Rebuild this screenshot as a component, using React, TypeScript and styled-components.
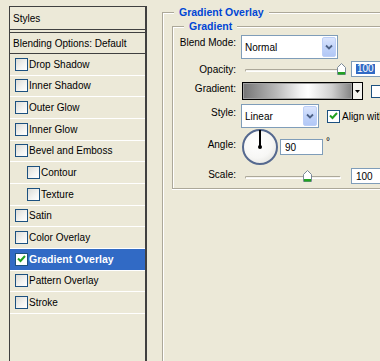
import React from 'react';
import styled, { createGlobalStyle } from 'styled-components';

const GlobalStyle = createGlobalStyle`
  html, body {
    margin: 0;
    padding: 0;
    background: #ece9d8;
    overflow: hidden;
  }
  body {
    font-family: "Liberation Sans", Arial, sans-serif;
    font-size: 10px;
    color: #000;
  }
`;

// Layout
const Dialog = styled.div`
  display: flex;
  align-items: flex-start;
  width: 380px;
  height: 361px;
  overflow: hidden;
  box-sizing: border-box;
  padding: 6px 0 0 9px;
  background: #ece9d8;
`;

// Styles list (left)
const StylesPanel = styled.div`
  flex: none;
  width: 138px;
  height: 400px;
  box-sizing: border-box;
  border: 1px solid #404040;
  border-right-width: 2px;
  border-bottom: none;
`;

const PanelHeader = styled.div`
  height: 22px;
  border-bottom: 1px solid #404040;
  display: flex;
  align-items: center;
  padding-left: 3px;
`;

const BlendingRow = styled.div`
  margin-top: 2px;
  height: 20px;
  border-top: 1px solid #404040;
  border-bottom: 1px solid #404040;
  display: flex;
  align-items: center;
  padding-left: 3px;
`;

const StyleRow = styled.div<{ $indent?: boolean; $selected?: boolean }>`
  height: 21.67px;
  box-sizing: border-box;
  border-bottom: 1px solid #fff;
  display: flex;
  align-items: center;
  gap: 1px;
  padding-left: ${(p) => (p.$indent ? 17 : 5)}px;
  background: ${(p) => (p.$selected ? '#316ac5' : 'transparent')};
  color: ${(p) => (p.$selected ? '#fff' : '#000')};
  font-weight: ${(p) => (p.$selected ? 'bold' : 'normal')};
  font-size: ${(p) => (p.$selected ? '10.5px' : '10px')};
`;

const CheckBoxFrame = styled.span<{ $light?: boolean }>`
  flex: none;
  width: 13px;
  height: 13px;
  box-sizing: border-box;
  border: 1px solid #1c5180;
  background: ${(p) =>
    p.$light ? '#fff' : 'linear-gradient(135deg, #dcdcd7 0%, #f4f4f2 60%, #fff 100%)'};
  display: flex;
  align-items: center;
  justify-content: center;
`;

// Group boxes (right)
const GroupBox = styled.fieldset<{ $inner?: boolean }>`
  margin: 0 0 0 ${(p) => (p.$inner ? 9 : 15)}px;
  padding: ${(p) => (p.$inner ? '0 0 4px 0' : '1px 0 0 0')};
  min-width: 0;
  flex: none;
  width: ${(p) => (p.$inner ? 230 : 240)}px;
  height: ${(p) => (p.$inner ? 'auto' : '380px')};
  box-sizing: border-box;
  border: 1px solid #aca899;
  box-shadow: inset 1px 1px 0 #fff, 0 1px 0 #fff;
`;

const Legend = styled.legend`
  margin-left: 11px;
  padding: 0 5px;
  line-height: 13px;
  font-size: 10.5px;
  font-weight: bold;
  color: #0046d5;
  background: #ece9d8;
`;

const FieldRow = styled.div<{ $top: number; $height: number }>`
  display: flex;
  align-items: center;
  margin-top: ${(p) => p.$top}px;
  height: ${(p) => p.$height}px;
`;

const FieldLabel = styled.span<{ $offset?: number }>`
  flex: none;
  width: 63px;
  margin-right: 5px;
  text-align: right;
  line-height: 13px;
  align-self: ${(p) => (p.$offset === undefined ? 'center' : 'flex-start')};
  margin-top: ${(p) => p.$offset ?? 0}px;
`;

const SelectBox = styled.div<{ $width: number }>`
  flex: none;
  width: ${(p) => p.$width}px;
  height: 100%;
  box-sizing: border-box;
  border: 1px solid #7f9db9;
  background: #fff;
  display: flex;
  align-items: center;
  padding-left: 3px;
`;

const DropButton = styled.span`
  margin: 1px 1px 1px auto;
  align-self: stretch;
  width: 14px;
  box-sizing: border-box;
  border: 1px solid #bccff7;
  border-radius: 2px;
  background: linear-gradient(180deg, #dbe5fd 0%, #c2d4fa 50%, #b2c8f6 100%);
  display: flex;
  align-items: center;
  justify-content: center;
`;

const TextBox = styled.div<{ $width: number }>`
  flex: none;
  width: ${(p) => p.$width}px;
  height: 16px;
  box-sizing: border-box;
  border: 1px solid #7f9db9;
  background: #fff;
  display: flex;
  align-items: center;
  padding-left: 4px;
  margin-left: ${(p) => (p.$width === 43 ? 2 : 4)}px;
`;

const Selected = styled.span`
  background: #316ac5;
  color: #fff;
  line-height: 10px;
  padding: 0 1px;
`;

const SliderWrap = styled.div`
  flex: none;
  position: relative;
  width: 106px;
  height: 100%;
  display: flex;
  align-items: center;
`;

const SliderTrack = styled.div`
  flex: 1;
  margin: 2px 6px 0 4px;
  height: 3px;
  box-sizing: border-box;
  border: 1px solid #aca899;
  border-bottom-color: #fff;
  border-right-color: #fff;
  border-radius: 2px;
  background: #f4f3ee;
`;

const SliderThumb = styled.svg`
  position: absolute;
  top: 50%;
  margin-top: -6px;
  margin-left: -4px;
`;

const GradientPicker = styled.div`
  flex: none;
  display: flex;
  width: 121px;
  height: 18px;
  margin-left: 1px;
  box-sizing: border-box;
  border: 1px solid #000;
`;

const GradientSwatch = styled.div`
  flex: 1;
  border: 1px solid #a0a0a0;
  background: linear-gradient(
    to right,
    #777 0%,
    #b9b9b9 30%,
    #f2f2f2 52%,
    #fff 60%,
    #d0d0d0 82%,
    #868686 100%
  );
`;

const GradientArrow = styled.div`
  flex: none;
  width: 9px;
  border-left: 1px solid #000;
  background: #f4f3ee;
  display: flex;
  align-items: center;
  justify-content: center;
`;

const InlineCheck = styled.div<{ $gap: number }>`
  flex: none;
  display: flex;
  align-items: center;
  gap: 2px;
  margin-left: ${(p) => p.$gap}px;
  white-space: nowrap;
`;

const Dial = styled.div`
  flex: none;
  position: relative;
  width: 36px;
  height: 36px;
  margin-left: 1px;
  box-sizing: border-box;
  border: 2px solid #55698f;
  border-radius: 50%;
  background: radial-gradient(circle at 40% 35%, #fff 0%, #f7f7f5 55%, #dcdcd6 100%);
`;

const DialHand = styled.div`
  position: absolute;
  left: 15px;
  top: -1px;
  width: 2px;
  height: 17px;
  background: #000;
`;

const DialHub = styled.div`
  position: absolute;
  left: 14px;
  top: 14px;
  width: 4px;
  height: 4px;
  border-radius: 50%;
  background: #000;
`;

const Degree = styled.span`
  flex: none;
  align-self: flex-start;
  margin: 8px 0 0 3px;
  line-height: 10px;
`;

// Pieces
const CheckMark = () => (
  <svg width="9" height="8" viewBox="0 0 9 8">
    <path d="M1 3.5 L3.5 6 L8 1" fill="none" stroke="#21a121" strokeWidth="2" />
  </svg>
);

const CheckBox: React.FC<{ checked?: boolean; light?: boolean }> = ({ checked, light }) => (
  <CheckBoxFrame $light={light}>{checked && <CheckMark />}</CheckBoxFrame>
);

const Chevron = () => (
  <svg width="8" height="6" viewBox="0 0 8 6">
    <path d="M1 1.5 L4 4.5 L7 1.5" fill="none" stroke="#4d6185" strokeWidth="1.8" />
  </svg>
);

const Select: React.FC<{ width: number; value: string }> = ({ width, value }) => (
  <SelectBox $width={width}>
    {value}
    <DropButton>
      <Chevron />
    </DropButton>
  </SelectBox>
);

const Slider: React.FC<{ fraction: number }> = ({ fraction }) => (
  <SliderWrap>
    <SliderTrack />
    <SliderThumb width="9" height="12" viewBox="0 0 9 12" style={{ left: 4 + fraction * 96 }}>
      <path d="M0.5 4.5 L4.5 0.5 L8.5 4.5 L8.5 11.5 L0.5 11.5 Z" fill="#fff" stroke="#7b8a98" />
      <rect x="1" y="9" width="7" height="2.5" fill="#21a121" />
    </SliderThumb>
  </SliderWrap>
);

const styleItems: { name: string; indent?: boolean; checked?: boolean }[] = [
  { name: 'Drop Shadow' },
  { name: 'Inner Shadow' },
  { name: 'Outer Glow' },
  { name: 'Inner Glow' },
  { name: 'Bevel and Emboss' },
  { name: 'Contour', indent: true },
  { name: 'Texture', indent: true },
  { name: 'Satin' },
  { name: 'Color Overlay' },
  { name: 'Gradient Overlay', checked: true },
  { name: 'Pattern Overlay' },
  { name: 'Stroke' },
];

export default function App() {
  return (
    <>
      <GlobalStyle />
      <Dialog>
        <StylesPanel>
          <PanelHeader>Styles</PanelHeader>
          <BlendingRow>Blending Options: Default</BlendingRow>
          {styleItems.map((item) => (
            <StyleRow key={item.name} $indent={item.indent} $selected={item.checked}>
              <CheckBox checked={item.checked} light={item.checked} />
              {item.name}
            </StyleRow>
          ))}
        </StylesPanel>

        <GroupBox>
          <Legend>Gradient Overlay</Legend>
          <GroupBox $inner>
            <Legend>Gradient</Legend>

            <FieldRow $top={2} $height={24}>
              <FieldLabel $offset={1}>Blend Mode:</FieldLabel>
              <Select width={97} value="Normal" />
            </FieldRow>

            <FieldRow $top={2} $height={16}>
              <FieldLabel>Opacity:</FieldLabel>
              <Slider fraction={1} />
              <TextBox $width={40}>
                <Selected>100</Selected>
              </TextBox>
            </FieldRow>

            <FieldRow $top={5} $height={18}>
              <FieldLabel $offset={0}>Gradient:</FieldLabel>
              <GradientPicker>
                <GradientSwatch />
                <GradientArrow>
                  <svg width="5" height="3" viewBox="0 0 5 3">
                    <path d="M0 0 H5 L2.5 3 Z" fill="#000" />
                  </svg>
                </GradientArrow>
              </GradientPicker>
              <InlineCheck $gap={8}>
                <CheckBox light />
                Reverse
              </InlineCheck>
            </FieldRow>

            <FieldRow $top={4} $height={24}>
              <FieldLabel $offset={2}>Style:</FieldLabel>
              <Select width={78} value="Linear" />
              <InlineCheck $gap={8}>
                <CheckBox checked light />
                Align with Layer
              </InlineCheck>
            </FieldRow>

            <FieldRow $top={1} $height={36}>
              <FieldLabel $offset={9}>Angle:</FieldLabel>
              <Dial>
                <DialHand />
                <DialHub />
              </Dial>
              <TextBox $width={43}>90</TextBox>
              <Degree>°</Degree>
            </FieldRow>

            <FieldRow $top={3} $height={16}>
              <FieldLabel $offset={0}>Scale:</FieldLabel>
              <Slider fraction={0.643} />
              <TextBox $width={40}>100</TextBox>
            </FieldRow>
          </GroupBox>
        </GroupBox>
      </Dialog>
    </>
  );
}
